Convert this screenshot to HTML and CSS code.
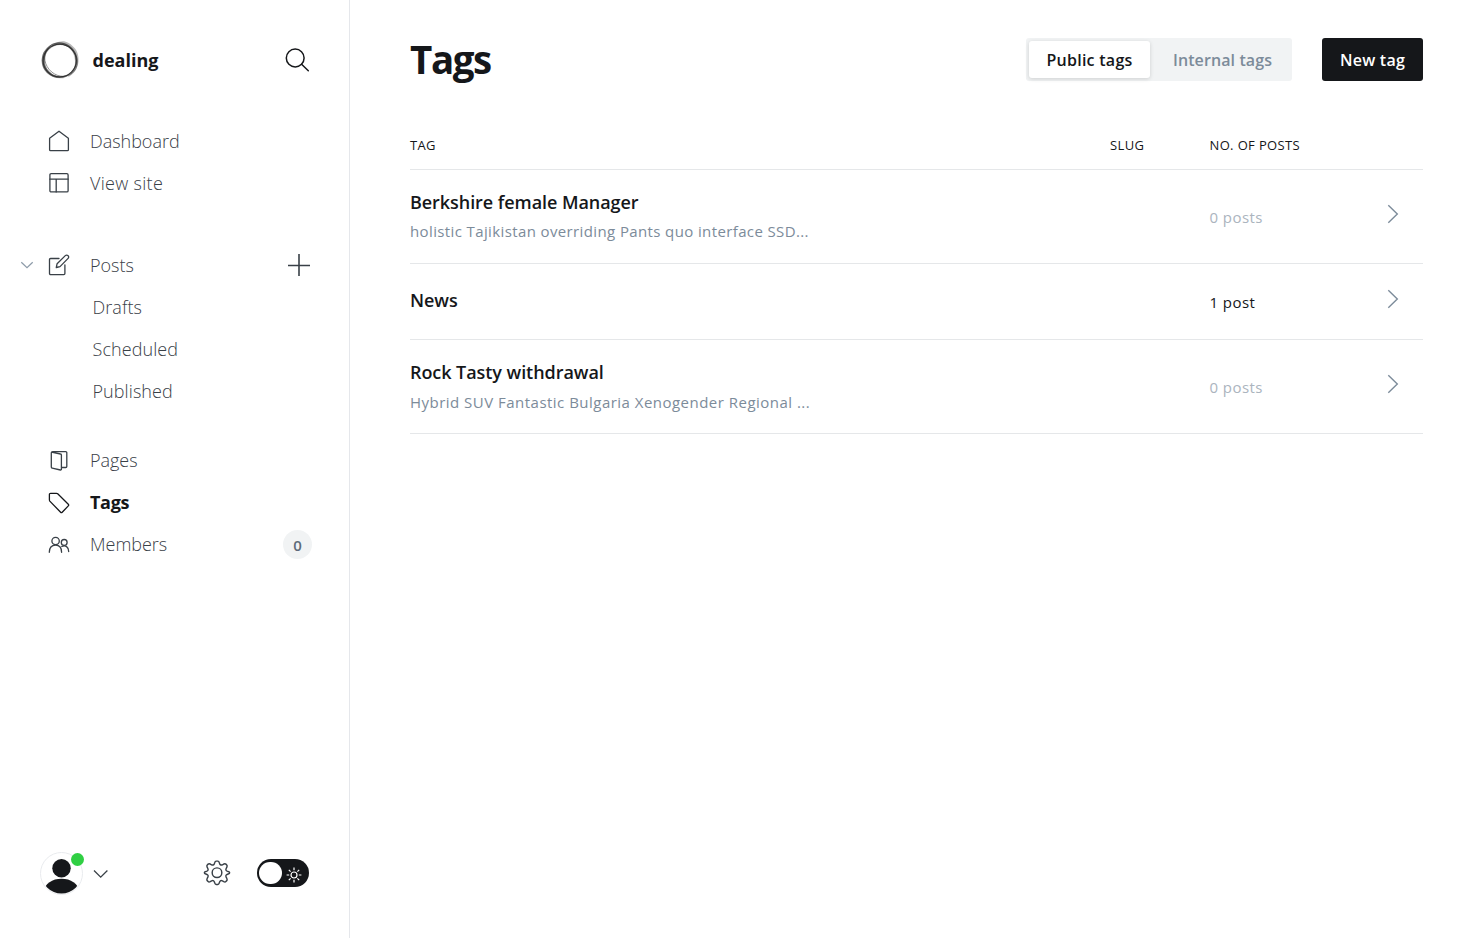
FILE: index.html
```html
<!DOCTYPE html>
<html lang="en">
<head>
<meta charset="utf-8">
<title>Tags</title>
<link rel="stylesheet" href="styles.css">
</head>
<body>
<div class="app">
  <aside class="sidebar">
    <header class="brand">
      <svg class="brand-logo" width="40" height="40" viewBox="0 0 40 40" fill="#222" fill-rule="evenodd">
        <path fill-opacity=".5" d="M19.500 2.500a17.800 17.800 0 1 0 .1 35.600 17.800 17.800 0 0 0-.1-35.600zM20.200 5a15.600 15.600 0 1 1-.1 31.200 15.600 15.600 0 0 1 .1-31.200z"/>
        <path fill-opacity=".32" d="M24 1.200c3.500.8 6 2.300 8.500 4.800 4.500 3.500 6.500 9 6 15.500-.6 7-5 13.500-11 15.700 5-4.200 7.800-9.700 7.500-16.200C34.500 11.500 29 5.500 20 4.600c-4 0-8 1.400-10.500 4.400C12.500 4 18 .8 24 1.200z"/>
        <path fill-opacity=".35" d="M3.500 12C.5 19 .8 27 6.500 32.500S19 39.500 26 37.500c-6 .5-12-1.500-16.500-6S3.500 21 6.500 12.500L10 6.500z"/>
        <g fill="none" stroke="#222">
          <ellipse cx="19.700" cy="20.600" rx="16.600" ry="16.300" stroke-width="1.100" stroke-opacity=".8"/>
          <ellipse cx="21" cy="19.600" rx="17.600" ry="15.400" stroke-width=".9" stroke-opacity=".5" transform="rotate(50 21 19.600)"/>
        </g>
      </svg>
      <span class="brand-name">dealing</span>
      <svg class="search" width="26" height="26" viewBox="0 0 26 26" fill="none" stroke="#15171a" stroke-width="1.5" stroke-linecap="round"><circle cx="11.2" cy="11" r="8.9"/><path d="M17.6 17.3 24.3 23.8"/></svg>
    </header>

    <nav class="menu">
      <ul class="group">
        <li class="item"><svg class="icon" viewBox="0 0 22 22"><path d="M1.6 8.2 11 1.2l9.4 7v11.6a.9.9 0 0 1-.9.9h-17a.9.9 0 0 1-.9-.9z"/></svg><span>Dashboard</span></li>
        <li class="item"><svg class="icon" viewBox="0 0 22 22"><rect x="1.9" y="1.7" width="18.2" height="18.2" rx="1.2"/><path d="M1.9 7.2h18.2M8.2 7.2v12.7"/></svg><span class="wide">View site</span></li>
      </ul>
      <ul class="group">
        <li class="item">
          <svg class="expand" width="14" height="8" viewBox="0 0 14 8"><path d="M1.3 1.3 7 6.7l5.7-5.4"/></svg>
          <svg class="icon" viewBox="0 0 22 22"><path d="M11 4.500H2.600A1.100 1.100 0 0 0 1.500 5.600v13.900a1.100 1.100 0 0 0 1.100 1.100h13.200a1.100 1.100 0 0 0 1.100-1.100v-8.700"/><path d="m8.300 13.500.8-3.800 8.200-8.100a1.900 1.900 0 0 1 2.700 0l.1.100a1.900 1.900 0 0 1 0 2.700l-8.100 8.200z"/></svg>
          <span>Posts</span>
          <svg class="add" width="24" height="24" viewBox="0 0 24 24"><path d="M12 1v22M1 12.500h22"/></svg>
        </li>
        <li class="item sub"><span>Drafts</span></li>
        <li class="item sub"><span>Scheduled</span></li>
        <li class="item sub"><span>Published</span></li>
      </ul>
      <ul class="group">
        <li class="item"><svg class="icon lower" viewBox="0 0 22 22"><path d="M3.500 2.200 12.500 4a1 1 0 0 1 .9 1v14.200a.8.8 0 0 1-1 .8l-8.200-1.800a1.100 1.100 0 0 1-.9-1.100V2.900c0-.9.5-1.300 1.400-1.300H17.700a1.100 1.100 0 0 1 1.100 1.100v13.700a1.100 1.100 0 0 1-1.100 1.100h-4.200"/></svg><span>Pages</span></li>
        <li class="item active"><svg class="icon lower" viewBox="0 0 22 22"><path d="M1.400 7.600V2.500c0-.7.500-1.200 1.200-1.200h5.900c.5 0 .9.200 1.200.5l10.600 10.500c.5.500.5 1.100 0 1.600l-6.100 6.300c-.5.500-1.100.5-1.600 0L1.800 9.100c-.3-.4-.4-.9-.4-1.500z"/></svg><span>Tags</span></li>
        <li class="item"><svg class="icon lower" viewBox="0 0 22 22"><circle cx="7.600" cy="7" r="3.700"/><path d="M1.300 18.300c0-4.500 2.500-7.200 6.300-7.200s6 2.700 6 7.200"/><circle cx="16.200" cy="8.400" r="2.900"/><path d="M13.800 12.500c3.600-1.700 6.900.3 6.900 5.100"/></svg><span>Members</span><span class="count">0</span></li>
      </ul>
    </nav>

    <footer class="account">
      <div class="avatar">
        <svg width="43" height="43" viewBox="0 0 43 43"><defs><clipPath id="avatar-clip"><circle cx="21.500" cy="21.500" r="20"/></clipPath></defs><circle cx="21.500" cy="21.500" r="21" fill="#fff" stroke="#e9ebee"/><circle cx="21.500" cy="16.200" r="9.200" fill="#15171a"/><ellipse cx="21.500" cy="38.500" rx="17" ry="11.700" fill="#15171a" clip-path="url(#avatar-clip)"/></svg>
        <span class="status"></span>
      </div>
      <svg class="account-arrow" width="16" height="10" viewBox="0 0 16 10"><path d="m1 1.500 6.700 6.700 6.700-6.700"/></svg>
      <svg class="gear" width="28" height="28" viewBox="-.5 -.2 29 29"><circle cx="14" cy="14" r="5"/><path d="M11.600 3.700Q12.100 2 13.100 2h1.800q1 0 1.500 1.700l.4 1.100q.9 1.900 2.800 1l1.400-.8q1.400-.7 2.200.1l.9.900q.8.800.1 2.200l-.7 1.400q-.9 2 .9 2.800l1.200.4q1.500.4 1.500 1.300 0 .9-1.500 1.300l-1.200.4q-1.800.8-.9 2.800l.7 1.400q.7 1.400-.1 2.200l-.9.900q-.8.800-2.200.1l-1.400-.8q-1.900-.9-2.800 1l-.4 1.100q-.5 1.700-1.500 1.700h-1.800q-1 0-1.500-1.700l-.4-1.100q-.9-1.900-2.800-1l-1.400.8q-1.400.7-2.200-.1l-.9-.9q-.8-.8-.1-2.200l.7-1.400q.9-2-.9-2.800l-1.200-.4q-1.500-.4-1.500-1.300 0-.9 1.500-1.300l1.200-.4q1.800-.8.9-2.800l-.7-1.400q-.7-1.400.1-2.200l.9-.9q.8-.8 2.200-.1l1.400.8q1.900.9 2.800-1z"/></svg>
      <div class="toggle">
        <span class="knob"></span>
        <svg width="16" height="16" viewBox="0 0 16 16"><circle cx="8" cy="8" r="3"/><path d="M8 .6v2.600M8 12.800v2.600M.6 8h2.600M12.800 8h2.600M2.800 2.800l1.800 1.800M11.400 11.400l1.800 1.800M2.800 13.200l1.800-1.800M11.400 4.600l1.800-1.800"/></svg>
      </div>
    </footer>
  </aside>

  <main class="content">
    <header class="page-head">
      <h1 class="title">Tags</h1>
      <div class="tabs"><button class="tab selected">Public tags</button><button class="tab">Internal tags</button></div>
      <button class="new-tag">New tag</button>
    </header>
    <section class="table">
      <div class="row head"><span>Tag</span><span>Slug</span><span>No. of posts</span></div>
      <div class="row tall">
        <div class="info"><h3 class="name">Berkshire female Manager</h3><p class="desc">holistic Tajikistan overriding Pants quo interface SSD...</p></div>
        <span></span><span class="posts none">0 posts</span>
        <svg class="arrow" width="12" height="20" viewBox="0 0 12 20"><path d="m1.300 1.300 9 8.700-9 8.700"/></svg>
      </div>
      <div class="row short">
        <div class="info"><h3 class="name">News</h3></div>
        <span></span><span class="posts">1 post</span>
        <svg class="arrow" width="12" height="20" viewBox="0 0 12 20"><path d="m1.300 1.300 9 8.700-9 8.700"/></svg>
      </div>
      <div class="row tall last">
        <div class="info"><h3 class="name">Rock Tasty withdrawal</h3><p class="desc">Hybrid SUV Fantastic Bulgaria Xenogender Regional ...</p></div>
        <span></span><span class="posts none">0 posts</span>
        <svg class="arrow" width="12" height="20" viewBox="0 0 12 20"><path d="m1.300 1.300 9 8.700-9 8.700"/></svg>
      </div>
    </section>
  </main>
</div>
</body>
</html>
```
FILE: styles.css
```css
* { box-sizing: border-box; margin: 0; padding: 0; }
body { font-family: "Open Sans", "Noto Sans", sans-serif; color: #15171a; background: #fff; }
ul { list-style: none; }
button { font: inherit; border: 0; background: none; }
svg { flex: none; display: block; }
.app { display: flex; height: 938px; }

.sidebar { width: 350px; flex: none; border-right: 1px solid #e5e7eb; display: flex; flex-direction: column; padding: 40px 37px 43px 40px; }
.brand { display: flex; align-items: center; height: 40px; }
.brand-name { margin-left: 12.5px; font-size: 18px; font-weight: 700; letter-spacing: 0; }
.search { margin: 0 2.5px 0 auto; }

.menu { margin-top: 40px; flex: 1; }
.group { margin-bottom: 40px; }
.group:nth-child(2) { margin-bottom: 27px; }
.item { position: relative; display: flex; align-items: center; height: 42px; padding-left: 8px; font-size: 18px; font-weight: 350; letter-spacing: -0.02px; color: #394047; }
.item.sub { padding-left: 52.5px; letter-spacing: 0.08px; }
.item.active { color: #15171a; font-weight: 700; letter-spacing: -0.3px; }
.wide { letter-spacing: 0.3px; }
.icon { width: 22px; height: 22px; margin-right: 20px; fill: none; stroke: #394047; stroke-width: 1.3; stroke-linejoin: round; stroke-linecap: round; }
.icon.lower { margin-top: 2px; }
.item.active .icon { stroke: #15171a; }
.expand { position: absolute; left: -20px; top: 17px; fill: none; stroke: #8d9ba9; stroke-width: 1.2; }
.add { margin-left: auto; margin-right: 1px; fill: none; stroke: #394047; stroke-width: 1.6; }
.count { margin-left: auto; width: 29px; height: 29px; border-radius: 50%; background: #f1f3f4; color: #5d6b7a; font-size: 15px; font-weight: 600; line-height: 30px; text-align: center; }

.account { display: flex; align-items: center; height: 43px; }
.avatar { position: relative; width: 43px; }
.status { position: absolute; left: 31px; top: 1px; width: 13px; height: 13px; border-radius: 50%; background: #30cf43; }
.account-arrow { margin-left: 10px; fill: none; stroke: #394047; stroke-width: 1.3; }
.gear { margin: -1px 0 0 93.5px; fill: none; stroke: #394047; stroke-width: 1.5; }
.toggle { display: flex; align-items: center; width: 52px; height: 28px; margin: -1px 0 0 26.5px; padding: 0 7px 0 2px; border-radius: 14px; background: #15171a; justify-content: space-between; }
.toggle svg { fill: none; stroke: #fff; stroke-width: 1.2; margin-top: 3px; }
.knob { width: 23px; height: 22px; border-radius: 11px; background: #fff; }

.content { flex: 1; padding: 38px 60px 0; }
.page-head { display: flex; align-items: center; height: 43px; }
.title { font-size: 38.5px; line-height: 43px; font-weight: 700; letter-spacing: -1.4px; }
.tabs { display: flex; align-items: center; margin-left: auto; width: 266px; height: 43px; padding: 3px; border-radius: 3px; background: #f1f3f4; font-size: 16px; font-weight: 600; }
.tab { height: 37px; width: 121px; color: #7c8b9a; border-radius: 3px; white-space: nowrap; letter-spacing: 0.1px; }
.tab + .tab { width: 139px; padding-left: 6px; }
.tab.selected { background: #fff; color: #15171a; letter-spacing: 0.27px; box-shadow: 0 1px 4px rgba(0, 0, 0, .15); }
.new-tag { width: 101px; height: 43px; margin-left: 30px; border-radius: 3px; background: #15171a; color: #fff; font-size: 16px; font-weight: 600; letter-spacing: 0.25px; white-space: nowrap; }

.table { margin-top: 40px; }
.row { display: grid; grid-template-columns: 700px 99.5px 1fr auto; align-items: center; border-bottom: 1px solid #e5e7e9; padding-right: 24.5px; }
.row.head { height: 49px; font-size: 13px; font-weight: 500; letter-spacing: 0.36px; text-transform: uppercase; }
.row.tall { height: 94px; }
.row.tall .info { margin-top: -2px; }
.row.tall.last .info { margin-top: 0; }
.row.short { height: 76px; }
.row.short .info { margin-top: -3px; }
.name { font-size: 18px; line-height: 24px; font-weight: 600; letter-spacing: -0.06px; white-space: nowrap; }
.desc { margin-top: 6px; font-size: 15px; line-height: 22px; letter-spacing: 0.38px; color: #7c8b9a; white-space: nowrap; }
.last .desc { margin-top: 7px; letter-spacing: 0.48px; }
.posts { padding-top: 1px; font-size: 15px; letter-spacing: 0.45px; }
.posts.none { color: #abb4be; }
.arrow { fill: none; stroke: #7c8b9a; stroke-width: 1.4; margin-top: -6px; }
```
